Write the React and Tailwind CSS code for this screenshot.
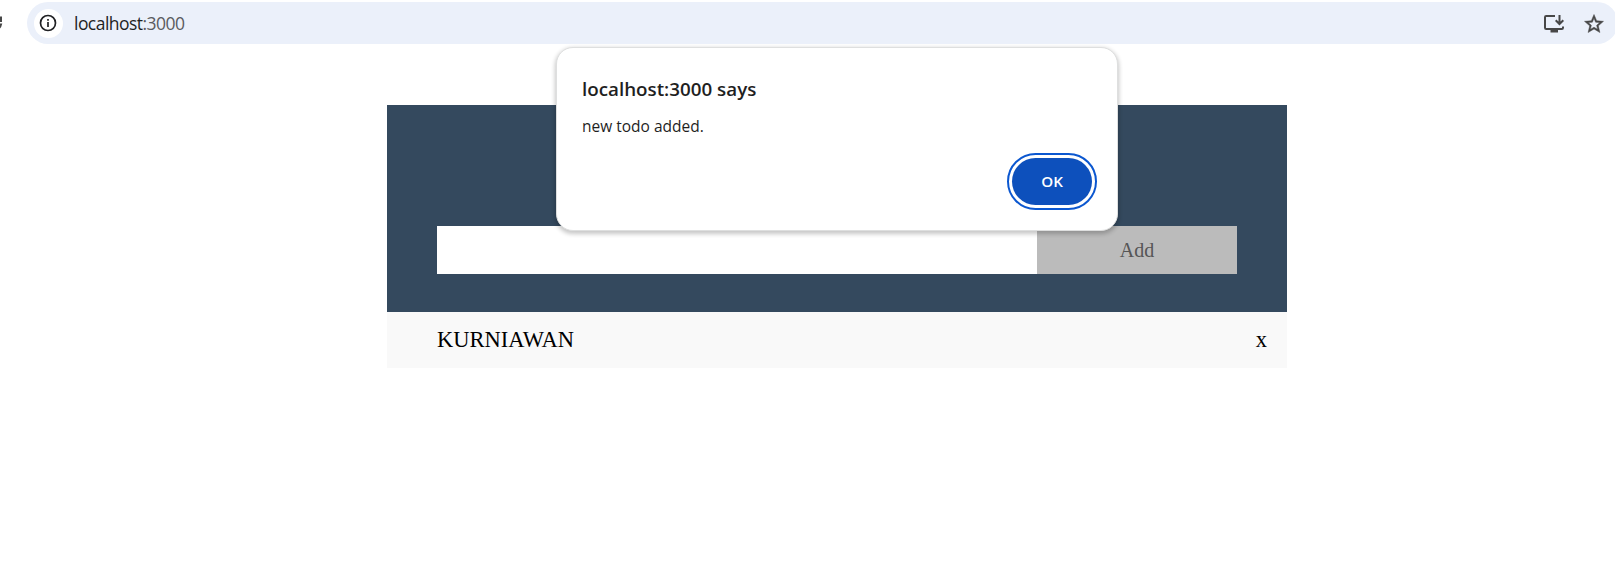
function InfoIcon() {
  return (
    <svg className="size-[18px]" viewBox="0 0 18 18" fill="none" stroke="#202124" strokeWidth="1.7">
      <circle cx="9" cy="9" r="7.5" />
      <path d="M9 8v5M9 5v1.700" />
    </svg>
  );
}

function InstallIcon() {
  return (
    <svg className="mt-px h-[20px] w-[22px] shrink-0" viewBox="0 0 22 20" fill="none" stroke="#474747" strokeWidth="2">
      <path d="M12 2H3.200Q2 2 2 3.200v10.600Q2 15 3.200 15h15.600Q20 15 20 13.800V12.500" />
      <path d="M16.500 1v8.500M12.700 6.300L16.500 10l3.800-3.700" />
      <path d="M7.500 17h7.500" strokeWidth="3" />
    </svg>
  );
}

function StarIcon() {
  return (
    <svg
      className="h-[19px] w-5 shrink-0"
      viewBox="1.500 1.500 21 20"
      fill="#474747"
      stroke="#474747"
      strokeWidth="0.5"
    >
      <path d="M22 9.240l-7.190-.62L12 2 9.190 8.630 2 9.240l5.460 4.730L5.820 21 12 17.270 18.180 21l-1.630-7.030L22 9.240zM12 15.400l-3.760 2.270 1-4.280-3.320-2.880 4.380-.38L12 6.100l1.710 4.040 4.380.38-3.320 2.880 1 4.280L12 15.400z" />
    </svg>
  );
}

function AddressBar() {
  return (
    <div className="flex h-11 items-center pt-0.5">
      <div className="flex w-[27px] shrink-0">
        <svg className="h-[14px] w-[3px]" viewBox="0 0 3 14" fill="#474747">
          <path d="M0 0.500h2v5.500H0zM0 7.500h2.300L1.200 11 0 12.500z" />
        </svg>
      </div>
      <div className="flex h-[42px] w-[1591px] shrink-0 items-center rounded-full bg-[#ebf0fa] pl-[7px] pr-[14px]">
        <div className="flex size-[29px] items-center justify-center rounded-full bg-white pr-px">
          <InfoIcon />
        </div>
        <span className="ml-[10px] pl-px font-['Open_Sans',sans-serif] text-[17.5px] leading-6 tracking-[-0.54px] text-[#1f1f1f]">
          localhost<span className="text-[#5a5b60]">:3000</span>
        </span>
        <div className="ml-auto flex items-center gap-[19px]">
          <InstallIcon />
          <StarIcon />
        </div>
      </div>
    </div>
  );
}

function AlertDialog() {
  return (
    <div
      role="alertdialog"
      className="absolute left-[556px] top-[47px] flex h-[184px] w-[562px] flex-col rounded-[17px] border border-[#dedfdf] bg-white pl-[25px] pr-[25px] pt-[27px] font-['Open_Sans',sans-serif] text-[#1f1f1f] shadow-[0_2px_4px_1px_rgba(0,0,0,0.22)]"
    >
      <h2 className="text-[18.8px] font-semibold leading-7">localhost:3000 says</h2>
      <p className="mt-[13px] text-[15.5px] leading-5">new todo added.</p>
      <button className="mt-[21.5px] h-[47px] w-20 self-end rounded-[24px] bg-[#0d50bc] text-[15.2px] font-semibold text-white outline-2 outline-offset-[3px] outline-[#0b57d0]">
        OK
      </button>
    </div>
  );
}

export default function App() {
  return (
    <div className="relative h-[573px] w-full overflow-hidden bg-white">
      <AddressBar />
      <main className="ml-[387px] mt-[61px] w-[900px] font-['Liberation_Serif',serif]">
        <header className="h-[207px] bg-[#34495e] px-[50px] pt-[121px]">
          <div className="flex h-12">
            <input className="w-[600px] bg-white px-3 text-[20px]" />
            <button className="w-[200px] bg-[#bbbbbb] text-[20px] text-[#555555]">Add</button>
          </div>
        </header>
        <ul>
          <li className="flex h-14 items-center justify-between bg-[#f9f9f9] pl-[50px] pr-5 text-[22.5px] leading-7 text-black">
            <span>KURNIAWAN</span>
            <span>x</span>
          </li>
        </ul>
      </main>
      <AlertDialog />
    </div>
  );
}
